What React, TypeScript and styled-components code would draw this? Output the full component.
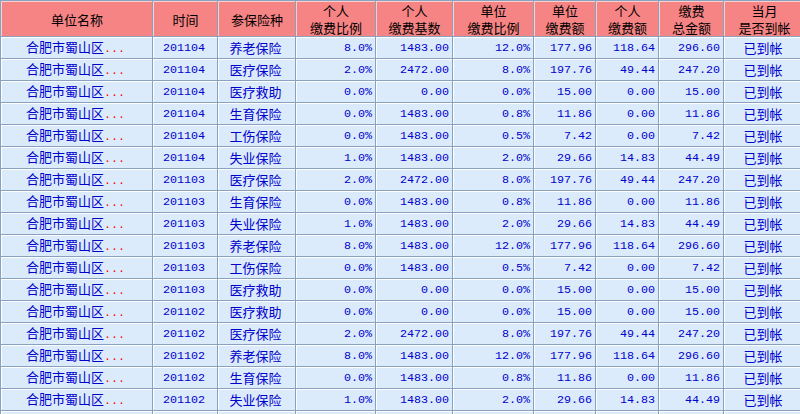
import React from "react";
import styled, { createGlobalStyle } from "styled-components";

const Global = createGlobalStyle`
  html, body { margin: 0; padding: 0; background: #ffffff; overflow: hidden; }
  body { width: 800px; height: 414px; }
`;

const Wrap = styled.div`
  width: 800px;
  height: 414px;
  overflow: hidden;
`;

const Table = styled.table`
  border-collapse: separate;
  border-spacing: 1px;
  background: #86a2bf;
  table-layout: fixed;
  width: 805px;
  font-family: "Noto Sans CJK SC", "Liberation Sans", sans-serif;
  font-size: 13px;
`;

const HeadRow = styled.tr`
  height: 35px;
`;

const Th = styled.th<{ $w: number }>`
  width: ${(p) => p.$w}px;
  box-sizing: border-box;
  background: #f78484;
  color: #000;
  font-weight: normal;
  line-height: 17px;
  padding: 0;
  border-top: 1px solid #fbd0d0;
  border-left: 1px solid #fbd0d0;
  text-align: center;
  vertical-align: middle;
`;

const Row = styled.tr`
  height: 21px;
`;

const Td = styled.td<{ $align?: "center" | "right" }>`
  box-sizing: border-box;
  background: #dcebfc;
  color: #0000cc;
  padding: 0 3px 0 0;
  line-height: 16px;
  border-top: 1px solid #ffffff;
  border-left: 1px solid #ffffff;
  text-align: ${(p) => p.$align ?? "center"};
  vertical-align: middle;
  white-space: nowrap;
  overflow: hidden;
`;

const Num = styled(Td)`
  font-family: "Liberation Mono", monospace;
  font-size: 11.7px;
`;

const Dots = styled.span`
  color: #ff0000;
  font-family: "Liberation Mono", monospace;
  font-size: 11.7px;
`;

const heads: [string, number][] = [
  ["单位名称", 151],
  ["时间", 64],
  ["参保险种", 77],
  ["个人\n缴费比例", 79],
  ["个人\n缴费基数", 76],
  ["单位\n缴费比例", 80],
  ["单位\n缴费额", 61],
  ["个人\n缴费额", 62],
  ["缴费\n总金额", 64],
  ["当月\n是否到帐", 80],
];

type R = [string, string, string, string, string, string, string, string];

const rows: R[] = [
  ["201104", "养老保险", "8.0%", "1483.00", "12.0%", "177.96", "118.64", "296.60"],
  ["201104", "医疗保险", "2.0%", "2472.00", "8.0%", "197.76", "49.44", "247.20"],
  ["201104", "医疗救助", "0.0%", "0.00", "0.0%", "15.00", "0.00", "15.00"],
  ["201104", "生育保险", "0.0%", "1483.00", "0.8%", "11.86", "0.00", "11.86"],
  ["201104", "工伤保险", "0.0%", "1483.00", "0.5%", "7.42", "0.00", "7.42"],
  ["201104", "失业保险", "1.0%", "1483.00", "2.0%", "29.66", "14.83", "44.49"],
  ["201103", "医疗保险", "2.0%", "2472.00", "8.0%", "197.76", "49.44", "247.20"],
  ["201103", "生育保险", "0.0%", "1483.00", "0.8%", "11.86", "0.00", "11.86"],
  ["201103", "失业保险", "1.0%", "1483.00", "2.0%", "29.66", "14.83", "44.49"],
  ["201103", "养老保险", "8.0%", "1483.00", "12.0%", "177.96", "118.64", "296.60"],
  ["201103", "工伤保险", "0.0%", "1483.00", "0.5%", "7.42", "0.00", "7.42"],
  ["201103", "医疗救助", "0.0%", "0.00", "0.0%", "15.00", "0.00", "15.00"],
  ["201102", "医疗救助", "0.0%", "0.00", "0.0%", "15.00", "0.00", "15.00"],
  ["201102", "医疗保险", "2.0%", "2472.00", "8.0%", "197.76", "49.44", "247.20"],
  ["201102", "养老保险", "8.0%", "1483.00", "12.0%", "177.96", "118.64", "296.60"],
  ["201102", "生育保险", "0.0%", "1483.00", "0.8%", "11.86", "0.00", "11.86"],
  ["201102", "失业保险", "1.0%", "1483.00", "2.0%", "29.66", "14.83", "44.49"],
];

export default function App() {
  return (
    <Wrap>
      <Global />
      <Table>
        <thead>
          <HeadRow>
            {heads.map(([t, w]) => (
              <Th key={t} $w={w}>
                {t.split("\n").map((l, i) => (
                  <React.Fragment key={i}>
                    {i > 0 && <br />}
                    {l}
                  </React.Fragment>
                ))}
              </Th>
            ))}
          </HeadRow>
        </thead>
        <tbody>
          {rows.map((r, i) => (
            <Row key={i}>
              <Td>
                合肥市蜀山区<Dots>...</Dots>
              </Td>
              <Num>{r[0]}</Num>
              <Td>{r[1]}</Td>
              <Num $align="right">{r[2]}</Num>
              <Num $align="right">{r[3]}</Num>
              <Num $align="right">{r[4]}</Num>
              <Num $align="right">{r[5]}</Num>
              <Num $align="right">{r[6]}</Num>
              <Num $align="right">{r[7]}</Num>
              <Td>已到帐</Td>
            </Row>
          ))}
          <Row>
            <Td />
            <Td />
            <Td />
            <Td />
            <Td />
            <Td />
            <Td />
            <Td />
            <Td />
            <Td />
          </Row>
        </tbody>
      </Table>
    </Wrap>
  );
}
